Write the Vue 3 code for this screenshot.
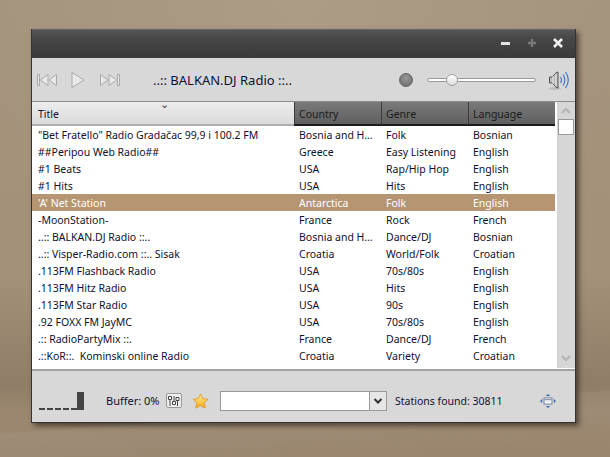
<template>
  <div class="desktop">
    <div class="window">
      <div class="titlebar">
        <svg class="win-btn" width="12" height="12" viewBox="0 0 12 12"><rect x="1" y="5" width="9" height="3" fill="#e4e4e4" /></svg>
        <svg class="win-btn" width="12" height="12" viewBox="0 0 12 12"><path d="M2 6h8M6 2v8" stroke="#777" stroke-width="2.4" /></svg>
        <svg class="win-btn" width="12" height="12" viewBox="0 0 12 12"><path d="M2 2l8 8M10 2l-8 8" stroke="#f0f0f0" stroke-width="2.6" /></svg>
      </div>

      <div class="toolbar">
        <div class="transport">
          <svg width="22" height="14" viewBox="0 0 22 14"><path d="M1.500 1.500v11h2v-11zM12 1.500L4.500 7l7.500 5.500zM20.500 1.500L13 7l7.500 5.500z" fill="#e8e8e8" stroke="#a9a9a9" /></svg>
          <svg class="play" width="16" height="18" viewBox="0 0 16 18"><path d="M2 1.500L14 9 2 16.500z" fill="#e8e8e8" stroke="#ababab" /></svg>
          <svg class="next" width="22" height="14" viewBox="0 0 22 14"><path d="M1.500 1.500L9 7l-7.500 5.500zM10 1.500L17.500 7 10 12.500zM18.500 1.500v11h2v-11z" fill="#e8e8e8" stroke="#a9a9a9" /></svg>
        </div>
        <span class="now-playing">..:: BALKAN.DJ Radio ::..</span>
        <span class="led"></span>
        <div class="slider"><span class="knob"></span></div>
        <svg class="speaker" width="22" height="22" viewBox="0 0 22 22">
          <ellipse cx="7" cy="19.500" rx="6" ry="1.500" fill="#bdbdbd" />
          <path d="M1.500 8h2.500l5-5h1v16h-1l-5-5H1.500z" fill="#b9b9b9" stroke="#555" />
          <path d="M5 7v8M8 5v12" stroke="#e8e8e8" />
          <path d="M12.500 8c1.300 2 1.300 4 0 6M15 5.500c2.300 3.500 2.300 7.500 0 11M17.500 3c3.500 5 3.500 11 0 16" fill="none" stroke="#3f7ac4" stroke-width="1.200" />
        </svg>
      </div>

      <div class="list">
        <div class="list-main">
          <div class="head">
            <div class="head-cell title-head">Title<span class="sort">⌄</span></div>
            <div class="head-cell" v-for="col in columns" :key="col">{{ col }}</div>
          </div>
          <div
            v-for="row in rows"
            :key="row[0]"
            class="row"
            :class="{ selected: row[0] === selected }"
          >
            <div class="cell" v-for="(val, i) in row" :key="i">{{ val }}</div>
          </div>
        </div>
        <div class="scrollbar">
          <svg width="18" height="14" viewBox="0 0 18 14"><path d="M5 9l4-4 4 4" fill="none" stroke="#b4b4b4" stroke-width="2" /></svg>
          <span class="thumb"></span>
          <svg class="down" width="18" height="14" viewBox="0 0 18 14"><path d="M5 5l4 4 4-4" fill="none" stroke="#b4b4b4" stroke-width="2" /></svg>
        </div>
      </div>

      <div class="footer">
        <div class="signal">
          <span v-for="n in 5" :key="n" class="dash"></span>
          <span class="bar"></span>
        </div>
        <span class="buffer">Buffer: 0%</span>
        <span class="eq">
          <svg width="14" height="12" viewBox="0 0 14 12"><path d="M1.500 1.500h3v3h-3zM9 2.500h3v3H9zM5.500 6.500h3v3h-3zM3 5v6M10.500 6v5M7 1v5" fill="#fff" stroke="#444" /></svg>
        </span>
        <svg class="star" width="17" height="16" viewBox="0 0 18 17">
          <defs>
            <linearGradient id="starFill" x1="0" y1="0" x2="0" y2="1">
              <stop offset="0" stop-color="#fff0a0" />
              <stop offset="1" stop-color="#fba90f" />
            </linearGradient>
          </defs>
          <path d="M9 1l2.400 5 5.600.7-4.100 3.800 1.100 5.500L9 13.300 4 16l1.100-5.500L1 6.700 6.600 6z" fill="url(#starFill)" stroke="#e09a2b" />
        </svg>
        <div class="combo">
          <span class="combo-input"></span>
          <span class="combo-arrow">
            <svg width="10" height="8" viewBox="0 0 10 8"><path d="M1.500 2L5 5.500 8.500 2" fill="none" stroke="#333" stroke-width="2" /></svg>
          </span>
        </div>
        <span class="found">Stations found: 30811</span>
        <svg class="resize" width="16" height="16" viewBox="0 0 18 16">
          <path d="M9 0l2.500 2.500h-5zM9 16l-2.500-2.500h5zM0 8l2.500-2.500v5zM18 8l-2.500 2.500v-5z" fill="#3d6fb0" />
          <rect x="4.500" y="4.500" width="9" height="7" fill="#eef1f5" stroke="#6b7c92" />
          <path d="M5 6.500h8" stroke="#6b7c92" />
        </svg>
      </div>
    </div>
  </div>
</template>

<script setup>
const columns = ["Country", "Genre", "Language"];
const selected = "'A' Net Station";

const rows = [
  ['"Bet Fratello" Radio Gradačac 99,9 i 100.2 FM', "Bosnia and H…", "Folk", "Bosnian"],
  ["##Peripou Web Radio##", "Greece", "Easy Listening", "English"],
  ["#1 Beats", "USA", "Rap/Hip Hop", "English"],
  ["#1 Hits", "USA", "Hits", "English"],
  ["'A' Net Station", "Antarctica", "Folk", "English"],
  ["-MoonStation-", "France", "Rock", "French"],
  ["..:: BALKAN.DJ Radio ::..", "Bosnia and H…", "Dance/DJ", "Bosnian"],
  ["..:: Visper-Radio.com ::.. Sisak", "Croatia", "World/Folk", "Croatian"],
  [".113FM Flashback Radio", "USA", "70s/80s", "English"],
  [".113FM Hitz Radio", "USA", "Hits", "English"],
  [".113FM Star Radio", "USA", "90s", "English"],
  [".92 FOXX FM JayMC", "USA", "70s/80s", "English"],
  [".:: RadioPartyMix ::.", "France", "Dance/DJ", "French"],
  [".::KoR::.  Kominski online Radio", "Croatia", "Variety", "Croatian"],
];
</script>

<style>
html,
body {
  margin: 0;
  overflow: hidden;
}
</style>

<style scoped>
.desktop {
  width: 610px;
  height: 457px;
  box-sizing: border-box;
  padding: 29px 34px 0 31px;
  background:
    linear-gradient(176deg, transparent 86.500%, rgba(255, 255, 255, 0.05) 87%, transparent 97%),
    radial-gradient(ellipse 340px 300px at 300px 0, #ac9c85, transparent),
    linear-gradient(180deg, #a5947d 0%, #a3917a 60%, #8f7d67 84%, #9b8770 90%, #9a866f 100%);
  font-family: "Noto Sans", sans-serif;
  font-size: 10.5px;
  color: #101030;
}

.window {
  display: flex;
  flex-direction: column;
  height: 394px;
  background: #d8d8d8;
  border-right: 1px solid #333;
  border-bottom: 1px solid #333;
  border-left: 1px solid #333;
  box-sizing: border-box;
  box-shadow: 3px 3px 5px rgba(40, 30, 20, 0.65);
}

.titlebar {
  display: flex;
  align-items: center;
  justify-content: flex-end;
  gap: 14px;
  height: 29px;
  padding: 0 11px 2px 0;
  background: linear-gradient(180deg, #555 0%, #474747 30%, #3a3a3a 100%);
  border-top: 1px solid #666;
  box-sizing: border-box;
}

.toolbar {
  display: flex;
  align-items: center;
  height: 43px;
  padding-left: 4px;
  font-size: 13px;
  box-sizing: border-box;
}

.toolbar > * {
  flex: none;
}

.transport {
  display: flex;
  align-items: center;
  width: 117px;
}

.play {
  margin-left: 12px;
}

.next {
  margin-left: 13px;
}

.now-playing {
  width: 246px;
  white-space: nowrap;
}

.led {
  width: 14px;
  height: 14px;
  border-radius: 50%;
  border: 1px solid #666;
  background: radial-gradient(circle at 50% 35%, #999, #666);
  box-sizing: border-box;
}

.slider {
  position: relative;
  width: 109px;
  height: 4px;
  margin-left: 14px;
  background: #fff;
  border: 1px solid #9a9a9a;
  border-radius: 3px;
  box-sizing: border-box;
}

.knob {
  position: absolute;
  left: 18px;
  top: -5px;
  width: 12px;
  height: 12px;
  border-radius: 50%;
  background: linear-gradient(180deg, #fff, #dedede);
  border: 1px solid #a0a0a0;
  box-sizing: border-box;
}

.speaker {
  margin-left: 12px;
}

.list {
  display: flex;
  height: 270px;
  background: #fff;
  border-top: 1px solid #8c8c8c;
  border-bottom: 2px solid #a2a2a2;
  box-sizing: border-box;
}

.list-main {
  width: 523px;
}

.head {
  display: grid;
  grid-template-columns: 262px 87px 87px 87px;
  height: 24px;
}

.head-cell {
  position: relative;
  padding: 5px 0 0 4px;
  background: linear-gradient(180deg, #7a7a7a, #5f5f5f);
  border-left: 1px solid #3c3c3c;
  border-bottom: 2px solid #1c1c1c;
  color: #1a1a1a;
  box-sizing: border-box;
}

.title-head {
  padding-left: 6px;
  background: linear-gradient(180deg, #ececec, #dcdcdc);
  border-left: 0;
  border-bottom: 2px solid #b0b0b0;
  color: #101030;
}

.sort {
  position: absolute;
  left: 128px;
  top: -6px;
  font-size: 11px;
  color: #444;
}

.row {
  display: grid;
  grid-template-columns: 262px 87px 87px 87px;
  height: 17px;
  line-height: 16px;
}

.cell {
  padding: 1px 0 0 5px;
  white-space: pre;
  overflow: hidden;
}

.row .cell:first-child {
  padding-left: 6px;
}

.selected {
  background: #b59572;
  color: #fff;
}

.scrollbar {
  display: flex;
  flex-direction: column;
  align-items: center;
  width: 18px;
  margin-left: 2px;
  margin-bottom: 1px;
  background: #d6d6d6;
  box-sizing: border-box;
}

.scrollbar svg {
  flex: none;
  margin-top: 2px;
}

.thumb {
  width: 16px;
  height: 16px;
  margin-top: 1px;
  background: #fff;
  border: 1px solid #999;
  box-sizing: border-box;
}

.down {
  margin-top: auto !important;
  margin-bottom: 3px;
}

.footer {
  display: flex;
  align-items: center;
  flex: 1;
  padding: 8px 0 0 7px;
}

.signal {
  display: flex;
  align-items: flex-end;
  gap: 2px;
  width: 67px;
  height: 18px;
}

.dash {
  width: 6px;
  height: 2px;
  background: #444;
}

.bar {
  width: 7px;
  height: 18px;
  margin-left: -2px;
  background: #444;
}

.buffer {
  width: 60px;
  font-size: 11px;
}

.eq {
  display: flex;
  align-items: center;
  justify-content: center;
  width: 16px;
  height: 15px;
  border: 1px solid #999;
  border-radius: 2px;
  background: #eee;
  box-sizing: border-box;
}

.eq svg {
  flex: none;
}

.star {
  margin-left: 10px;
}

.combo {
  display: flex;
  width: 167px;
  height: 20px;
  margin-left: 11px;
  border: 1px solid #999;
  box-sizing: border-box;
  background: #fff;
}

.combo-input {
  flex: 1;
}

.combo-arrow {
  display: flex;
  align-items: center;
  justify-content: center;
  width: 16px;
  background: #e6e6e6;
  border-left: 1px solid #999;
}

.found {
  margin-left: 8px;
  width: 145px;
  white-space: nowrap;
}

.resize {
  flex: none;
}
</style>
